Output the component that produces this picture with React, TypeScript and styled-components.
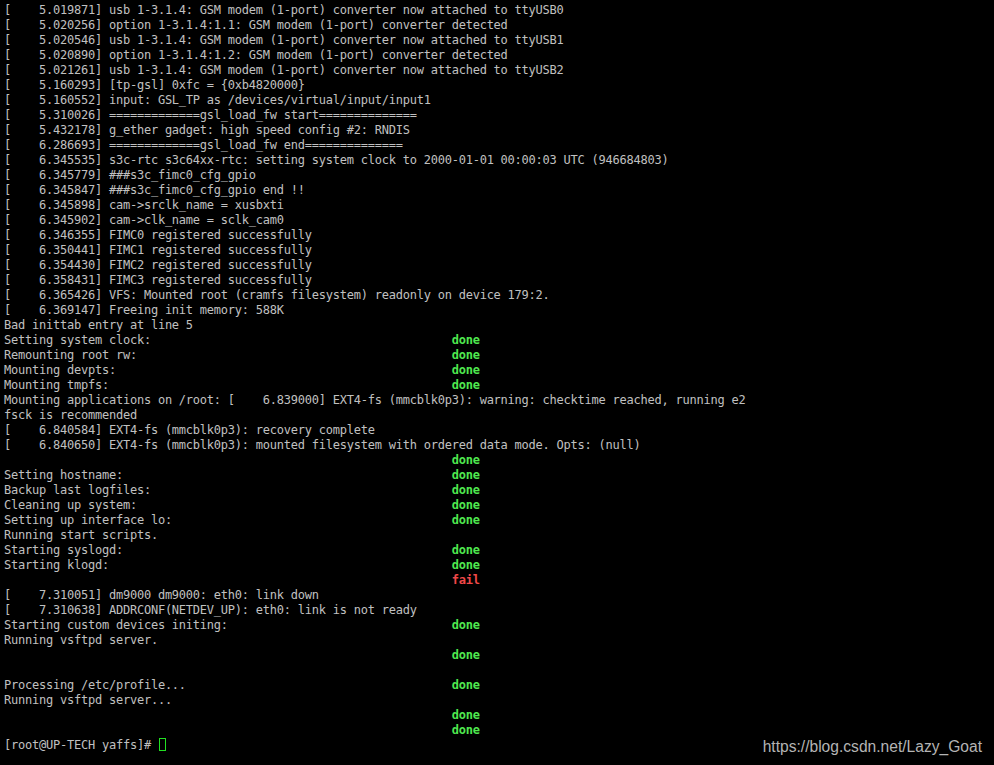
import React from "react";
import styled, { createGlobalStyle } from "styled-components";

const Global = createGlobalStyle`
  html, body {
    margin: 0;
    padding: 0;
    background: #000;
  }
  #root {
    min-height: 765px;
  }
`;

const Screen = styled.div`
  position: relative;
  width: 994px;
  height: 765px;
  background: #000;
  overflow: hidden;
`;

const Terminal = styled.div`
  display: flex;
  flex-direction: column;
  padding: 3px 0 0 4px;
  font-family: "DejaVu Sans Mono", "Liberation Mono", monospace;
  font-size: 12px;
  letter-spacing: -0.23px;
  color: #c0c0c0;
`;

const Line = styled.div`
  height: 15px;
  line-height: 15px;
  white-space: pre;
`;

const Status = styled.span<{ $kind: "done" | "fail" }>`
  font-weight: bold;
  color: ${(p) => (p.$kind === "done" ? "#4fe84f" : "#f04848")};
`;

const Cursor = styled.span`
  display: inline-block;
  width: 5px;
  height: 11px;
  border: 1px solid #22e022;
  vertical-align: -2px;
  margin-left: 1px;
`;

const Watermark = styled.div`
  position: absolute;
  right: 12px;
  bottom: 9px;
  font-family: "Liberation Sans", Arial, sans-serif;
  font-size: 15.6px;
  color: #b4b4b4;
  text-shadow: 0 0 1px #000;
`;

type Row = { text: string; status?: "done" | "fail"; cursor?: boolean };

const k = (t: string, s: string) => `[    ${t}] ${s}`;
const COL = 64;
const st = (label: string, status: "done" | "fail" = "done"): Row => ({
  text: label.padEnd(COL, " "),
  status,
});

const rows: Row[] = [
  { text: k("5.019871", "usb 1-3.1.4: GSM modem (1-port) converter now attached to ttyUSB0") },
  { text: k("5.020256", "option 1-3.1.4:1.1: GSM modem (1-port) converter detected") },
  { text: k("5.020546", "usb 1-3.1.4: GSM modem (1-port) converter now attached to ttyUSB1") },
  { text: k("5.020890", "option 1-3.1.4:1.2: GSM modem (1-port) converter detected") },
  { text: k("5.021261", "usb 1-3.1.4: GSM modem (1-port) converter now attached to ttyUSB2") },
  { text: k("5.160293", "[tp-gsl] 0xfc = {0xb4820000}") },
  { text: k("5.160552", "input: GSL_TP as /devices/virtual/input/input1") },
  { text: k("5.310026", "=============gsl_load_fw start==============") },
  { text: k("5.432178", "g_ether gadget: high speed config #2: RNDIS") },
  { text: k("6.286693", "=============gsl_load_fw end==============") },
  { text: k("6.345535", "s3c-rtc s3c64xx-rtc: setting system clock to 2000-01-01 00:00:03 UTC (946684803)") },
  { text: k("6.345779", "###s3c_fimc0_cfg_gpio") },
  { text: k("6.345847", "###s3c_fimc0_cfg_gpio end !!") },
  { text: k("6.345898", "cam->srclk_name = xusbxti") },
  { text: k("6.345902", "cam->clk_name = sclk_cam0") },
  { text: k("6.346355", "FIMC0 registered successfully") },
  { text: k("6.350441", "FIMC1 registered successfully") },
  { text: k("6.354430", "FIMC2 registered successfully") },
  { text: k("6.358431", "FIMC3 registered successfully") },
  { text: k("6.365426", "VFS: Mounted root (cramfs filesystem) readonly on device 179:2.") },
  { text: k("6.369147", "Freeing init memory: 588K") },
  { text: "Bad inittab entry at line 5" },
  st("Setting system clock:"),
  st("Remounting root rw:"),
  st("Mounting devpts:"),
  st("Mounting tmpfs:"),
  { text: "Mounting applications on /root: [    6.839000] EXT4-fs (mmcblk0p3): warning: checktime reached, running e2" },
  { text: "fsck is recommended" },
  { text: k("6.840584", "EXT4-fs (mmcblk0p3): recovery complete") },
  { text: k("6.840650", "EXT4-fs (mmcblk0p3): mounted filesystem with ordered data mode. Opts: (null)") },
  st(""),
  st("Setting hostname:"),
  st("Backup last logfiles:"),
  st("Cleaning up system:"),
  st("Setting up interface lo:"),
  { text: "Running start scripts." },
  st("Starting syslogd:"),
  st("Starting klogd:"),
  st("", "fail"),
  { text: k("7.310051", "dm9000 dm9000: eth0: link down") },
  { text: k("7.310638", "ADDRCONF(NETDEV_UP): eth0: link is not ready") },
  st("Starting custom devices initing:"),
  { text: "Running vsftpd server." },
  st(""),
  { text: "" },
  st("Processing /etc/profile..."),
  { text: "Running vsftpd server..." },
  st(""),
  st(""),
  { text: "[root@UP-TECH yaffs]# ", cursor: true },
];

export default function App() {
  return (
    <Screen>
      <Global />
      <Terminal>
        {rows.map((r, i) => (
          <Line key={i}>
            {r.text}
            {r.status && <Status $kind={r.status}>{r.status}</Status>}
            {r.cursor && <Cursor />}
          </Line>
        ))}
      </Terminal>
      <Watermark>https://blog.csdn.net/Lazy_Goat</Watermark>
    </Screen>
  );
}
